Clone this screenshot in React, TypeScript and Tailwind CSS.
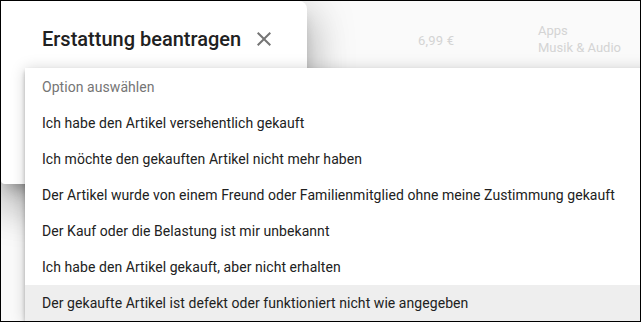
import React from "react";

const options = [
  "Ich habe den Artikel versehentlich gekauft",
  "Ich möchte den gekauften Artikel nicht mehr haben",
  "Der Artikel wurde von einem Freund oder Familienmitglied ohne meine Zustimmung gekauft",
  "Der Kauf oder die Belastung ist mir unbekannt",
  "Ich habe den Artikel gekauft, aber nicht erhalten",
  "Der gekaufte Artikel ist defekt oder funktioniert nicht wie angegeben",
];

export default function App() {
  return (
    <div
      className="relative w-[641px] h-[322px] overflow-hidden border border-black bg-[#fafafa]"
      style={{ fontFamily: "Roboto, 'Liberation Sans', sans-serif" }}
    >
      {/* faded page content behind the dialog */}
      <div className="flex items-start pl-[417px] pt-[21px] text-[13px] text-[#d4d4d4]">
        <div className="pt-[9px] w-[120px] tracking-[0.2px]">6,99 €</div>
        <div className="flex flex-col leading-[17px]">
          <span>Apps</span>
          <span>Musik &amp; Audio</span>
        </div>
      </div>

      {/* dialog */}
      <div className="absolute left-0 top-0 w-[306px] h-[183px] rounded-r-lg rounded-bl-sm bg-white shadow-[0_11px_15px_-7px_rgba(0,0,0,0.3),0_24px_38px_3px_rgba(0,0,0,0.18),0_9px_46px_8px_rgba(0,0,0,0.14)]">
        <div className="flex items-center pl-[41px] pt-[22px]">
          <span className="text-[20px] font-medium text-[#212121] leading-[32px]">
            Erstattung beantragen
          </span>
          <svg
            className="ml-[11px]"
            width="24"
            height="24"
            viewBox="0 0 24 24"
            fill="#757575"
          >
            <path d="M19 6.41L17.59 5 12 10.59 6.41 5 5 6.41 10.59 12 5 17.59 6.41 19 12 13.41 17.59 19 19 17.59 13.41 12z" />
          </svg>
        </div>
      </div>

      {/* dropdown */}
      <div className="absolute left-[24px] top-[67px] w-[640px] bg-white pt-px shadow-[0_2px_4px_-1px_rgba(0,0,0,0.2),0_4px_5px_0_rgba(0,0,0,0.14),0_1px_14px_0_rgba(0,0,0,0.18)]">
        <div className="h-[36px] flex items-center pl-[17px] text-[14px] tracking-[0.06px] text-[#757575]">
          Option auswählen
        </div>
        {options.map((o, i) => (
          <div
            key={i}
            className={
              i === options.length - 1
                ? "h-[36px] flex items-center pl-[17px] text-[14px] tracking-[0.06px] text-[#212121] bg-[#eeeeee]"
                : "h-[36px] flex items-center pl-[17px] text-[14px] tracking-[0.06px] text-[#212121]"
            }
          >
            {o}
          </div>
        ))}
      </div>
    </div>
  );
}
